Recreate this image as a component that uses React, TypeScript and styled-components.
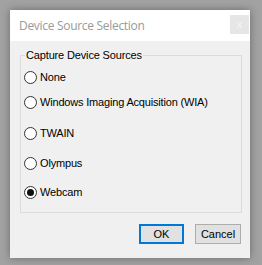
import React from 'react';
import styled, { createGlobalStyle } from 'styled-components';

const GlobalStyle = createGlobalStyle`
  html, body {
    margin: 0;
    padding: 0;
    background: #a2a2a2;
  }
  * {
    box-sizing: border-box;
  }
`;

const Page = styled.div`
  width: 262px;
  height: 265px;
  padding: 10px 0 0 10px;
`;

const Dialog = styled.div`
  width: 240px;
  height: 248px;
  background: #f0f0f0;
  box-shadow: 0 0 8px rgba(0, 0, 0, 0.35);
  display: flex;
  flex-direction: column;
  font-family: 'Liberation Sans', Arial, sans-serif;
`;

const TitleBar = styled.div`
  height: 31px;
  background: #ffffff;
  display: flex;
  align-items: center;
  justify-content: space-between;
  padding: 0 1px 0 9px;
`;

const Title = styled.span`
  font-family: 'Open Sans', 'Noto Sans', sans-serif;
  font-size: 12px;
  letter-spacing: -0.3px;
  color: #9a9a9a;
  margin-top: -1px;
`;

const CloseBox = styled.div`
  width: 19px;
  height: 19px;
  background: #e6e6e6;
  color: #f6f6f6;
  font-size: 11px;
  display: flex;
  align-items: center;
  justify-content: center;
  margin-top: -3px;
`;

const Body = styled.div`
  flex: 1;
  display: flex;
  flex-direction: column;
  padding: 8px 9px 14px 10px;
`;

const Group = styled.fieldset`
  margin: 0;
  width: 222px;
  height: 164px;
  min-width: 0;
  border: 1px solid #dcdcdc;
  padding: 0;
`;

const Legend = styled.legend`
  font-size: 11px;
  line-height: 13px;
  letter-spacing: -0.15px;
  color: #000;
  padding: 0 1px;
  margin-left: 4px;
`;

const Options = styled.div`
  display: flex;
  flex-direction: column;
  padding-left: 3px;
  margin-top: 8px;
`;

const Row = styled.label<{ $gap: number }>`
  display: flex;
  align-items: center;
  height: 14px;
  margin-top: ${p => p.$gap}px;
  font-size: 11px;
  letter-spacing: -0.18px;
  color: #000;
`;

const Circle = styled.span<{ $on: boolean }>`
  flex: none;
  width: 13px;
  height: 13px;
  border: 1px solid #333;
  border-radius: 50%;
  background: #fff;
  margin-right: 3px;
  display: flex;
  align-items: center;
  justify-content: center;
  &::after {
    content: '';
    display: ${p => (p.$on ? 'block' : 'none')};
    width: 7px;
    height: 7px;
    border-radius: 50%;
    background: #111;
  }
`;

const Buttons = styled.div`
  display: flex;
  justify-content: flex-end;
  gap: 11px;
  margin-top: auto;
`;

const Button = styled.button<{ $primary?: boolean }>`
  height: 20px;
  width: ${p => (p.$primary ? 45 : 46)}px;
  padding: 0;
  font-family: 'Liberation Sans', Arial, sans-serif;
  font-size: 11px;
  color: #000;
  background: #e1e1e1;
  border: ${p => (p.$primary ? '2px solid #0078d7' : '1px solid #adadad')};
`;

const options = [
  { label: 'None', gap: 0 },
  { label: 'Windows Imaging Acquisition (WIA)', gap: 11 },
  { label: 'TWAIN', gap: 17 },
  { label: 'Olympus', gap: 16 },
  { label: 'Webcam', gap: 15 },
];

export default function App() {
  const selected = 'Webcam';
  return (
    <Page>
      <GlobalStyle />
      <Dialog>
        <TitleBar>
          <Title>Device Source Selection</Title>
          <CloseBox>x</CloseBox>
        </TitleBar>
        <Body>
          <Group>
            <Legend>Capture Device Sources</Legend>
            <Options>
              {options.map(o => (
                <Row key={o.label} $gap={o.gap}>
                  <Circle $on={o.label === selected} />
                  {o.label}
                </Row>
              ))}
            </Options>
          </Group>
          <Buttons>
            <Button $primary>OK</Button>
            <Button>Cancel</Button>
          </Buttons>
        </Body>
      </Dialog>
    </Page>
  );
}
